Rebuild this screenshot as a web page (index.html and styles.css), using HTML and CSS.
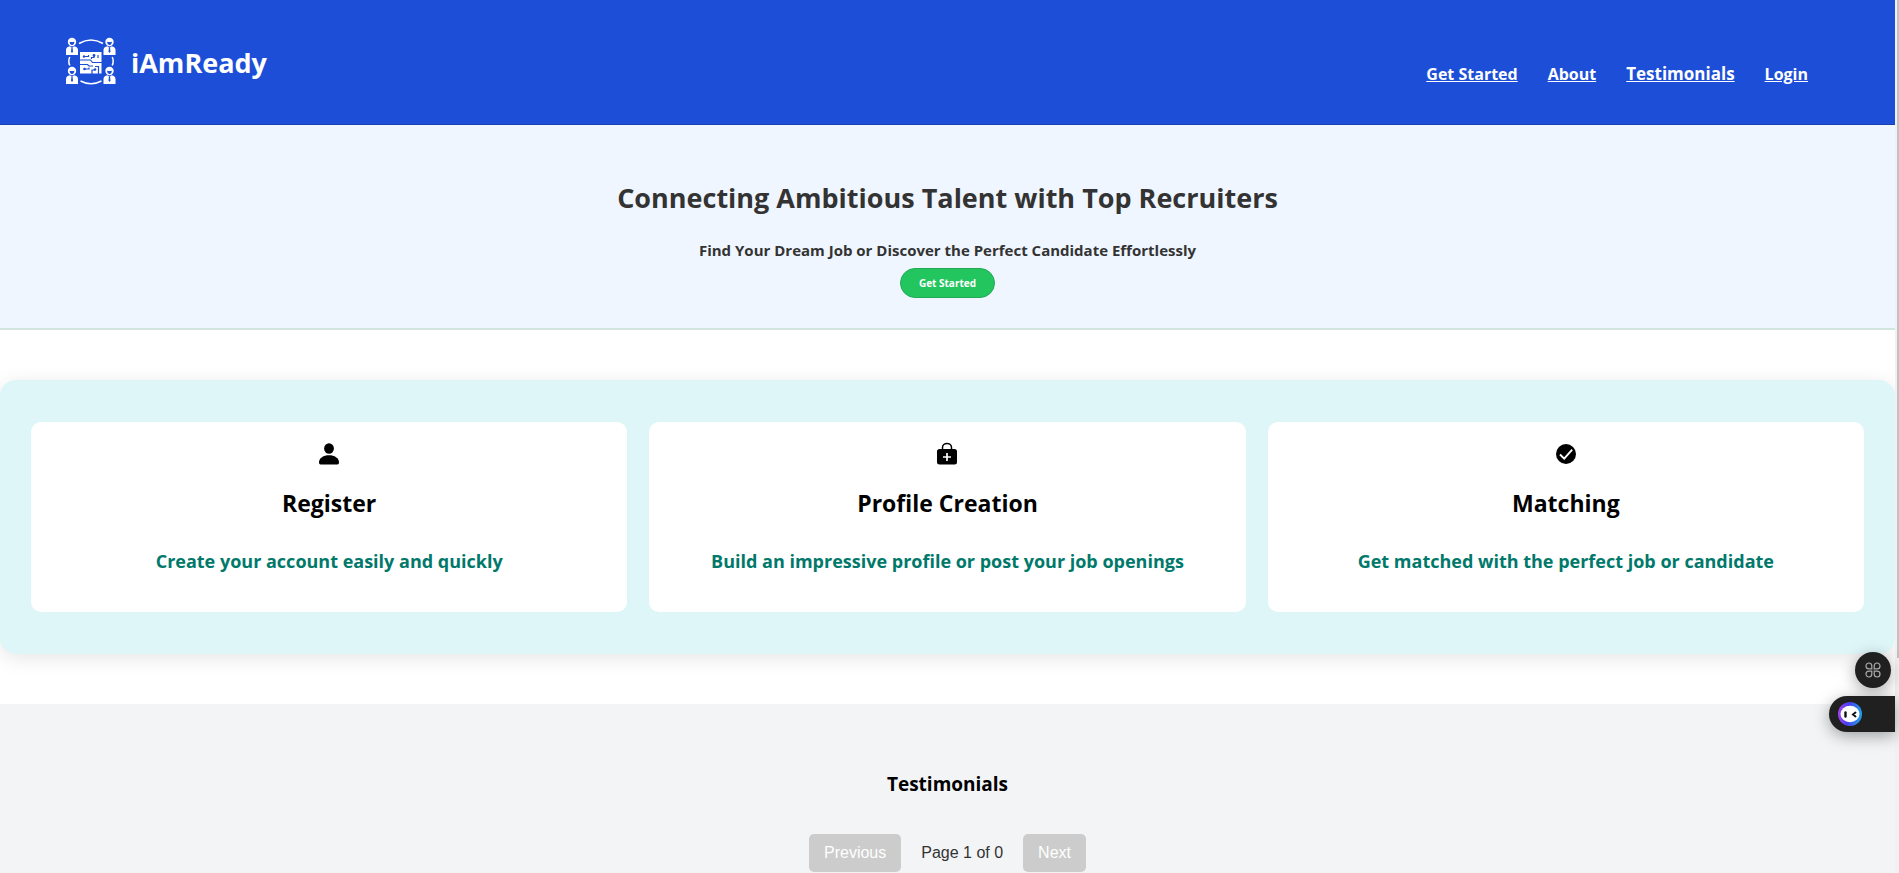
FILE: index.html
```html
<!DOCTYPE html>
<html lang="en">
<head>
<meta charset="utf-8">
<title>iAmReady</title>
<link rel="stylesheet" href="styles.css">
</head>
<body>
<div class="page">
  <header class="header">
    <div class="brand">
      <svg class="brand-logo" viewBox="5 6 52 52" aria-hidden="true">
        <defs>
          <g id="person">
            <circle cx="6" cy="4.5" r="4.2" fill="#fff"/>
            <path d="M3.6 4.2Q6 5 8.4 4.2Q8.3 7.2 6 7.4Q3.7 7.2 3.6 4.2Z" fill="#1d4ed8"/>
            <path d="M0 17.5V12.5Q0 9.6 4 8.8L6 10.4L8 8.8Q12 9.6 12 12.5V17.5Z" fill="#fff"/>
            <path d="M5.4 10.6H6.6L7 14L6 15.4L5 14Z" fill="#1d4ed8"/>
          </g>
        </defs>
        <use href="#person" x="6" y="7.5"/>
        <use href="#person" x="43.5" y="7.5"/>
        <use href="#person" x="6" y="36.5"/>
        <use href="#person" x="43.5" y="36.5"/>
        <g fill="none" stroke="#fff" stroke-width="1.5">
          <path d="M19 13.5Q31 6.5 43 13.5"/>
          <path d="M20.5 51Q31 56.5 41.5 51"/>
          <path d="M9.8 27Q7.8 31 9.8 35.5"/>
          <path d="M52.2 27Q54.2 31 52.2 35.5"/>
        </g>
        <rect x="20" y="22" width="21.5" height="21.5" fill="#fff"/>
        <g fill="none" stroke="#1d4ed8" stroke-width="1.2">
          <path d="M24 26.5H28.500V25M34 25V27.500H31.500V29M20 30H30.500L32.500 32.500H42M38 28V25M20 34.500H27.500L29 36H33M24.500 39H29V37.500M32 44V40H35M38.500 44V36.500H35"/>
        </g>
        <g fill="#1d4ed8"><circle cx="24" cy="26.5" r="1.2"/><circle cx="34" cy="25.5" r="1.4"/><circle cx="24.500" cy="39" r="1.3"/><circle cx="35" cy="39.5" r="1.3"/></g>
      </svg>
      <span class="brand-name">iAmReady</span>
    </div>
    <nav class="nav">
      <a href="#start">Get Started</a>
      <a href="#about">About</a>
      <a class="nav-large" href="#testimonials">Testimonials</a>
      <a href="#login">Login</a>
    </nav>
  </header>

  <main>
    <section class="hero" id="start">
      <h1 class="hero-title">Connecting Ambitious Talent with Top Recruiters</h1>
      <p class="hero-text">Find Your Dream Job or Discover the Perfect Candidate Effortlessly</p>
      <button class="hero-button" type="button">Get Started</button>
    </section>

    <section class="steps" id="about">
      <article class="card">
        <svg class="card-icon" viewBox="0 0 24 24" aria-hidden="true"><ellipse cx="12" cy="6.5" rx="4.9" ry="5.2"/><path d="M2 20.5C2 16 6.500 13.300 12 13.300S22 16 22 20.500Q22 22.500 20.500 22.500H3.500Q2 22.500 2 20.500Z"/></svg>
        <h2 class="card-title">Register</h2>
        <p class="card-text">Create your account easily and quickly</p>
      </article>
      <article class="card">
        <svg class="card-icon" viewBox="0 0 24 24" aria-hidden="true"><rect x="2" y="7" width="20" height="15.5" rx="2.5"/><path d="M7.5 7V5.5a4.5 4 0 0 1 9 0V7" fill="none" stroke="#000" stroke-width="1.5"/><path d="M12 11v8M8 15h8" stroke="#fff" stroke-width="1.7"/></svg>
        <h2 class="card-title">Profile Creation</h2>
        <p class="card-text">Build an impressive profile or post your job openings</p>
      </article>
      <article class="card">
        <svg class="card-icon" viewBox="0 0 24 24" aria-hidden="true"><circle cx="12" cy="12" r="10"/><path d="M6 12.5L10.200 16.700L18.200 7.700" fill="none" stroke="#fff" stroke-width="1.9"/></svg>
        <h2 class="card-title">Matching</h2>
        <p class="card-text">Get matched with the perfect job or candidate</p>
      </article>
    </section>

    <section class="testimonials" id="testimonials">
      <h2 class="testimonials-title">Testimonials</h2>
      <div class="pager">
        <button class="pager-button" type="button" disabled>Previous</button>
        <span class="pager-status">Page 1 of 0</span>
        <button class="pager-button" type="button" disabled>Next</button>
      </div>
    </section>
  </main>
</div>

<div class="scroll-rail" aria-hidden="true"><div class="scroll-thumb"></div></div>

<div class="widgets">
  <button class="widget-apps" type="button" aria-label="Apps">
    <svg viewBox="0 0 16 16" width="16" height="16" fill="none" stroke="#aaa" stroke-width="1.2"><path d="M6.800 6.800H3.900A2.900 2.900 0 1 1 6.800 3.900ZM9.200 6.800V3.900A2.900 2.900 0 1 1 12.100 6.800ZM6.800 9.200V12.100A2.900 2.900 0 1 1 3.900 9.200ZM9.200 9.200H12.100A2.900 2.900 0 1 1 9.200 12.100Z"/></svg>
  </button>
  <button class="widget-chat" type="button" aria-label="Assistant">
    <svg viewBox="0 0 24 24" width="24" height="24">
      <defs><linearGradient id="ring" x1="0" y1=".6" x2="1" y2=".7"><stop offset="0" stop-color="#a142f0"/><stop offset=".4" stop-color="#4a3df0"/><stop offset="1" stop-color="#1fa8e8"/></linearGradient></defs>
      <circle cx="12" cy="12" r="12" fill="url(#ring)"/>
      <ellipse cx="12" cy="12" rx="9.5" ry="8.3" fill="#fff"/>
      <path d="M7.5 10.5V14.5" stroke="#111" stroke-width="2.4" stroke-linecap="round"/>
      <path d="M17.5 10.5L15 12.5L17.5 14.5" fill="none" stroke="#111" stroke-width="2" stroke-linecap="round"/>
    </svg>
  </button>
</div>
</body>
</html>
```
FILE: styles.css
```css
* {
  box-sizing: border-box;
}

body {
  display: flex;
  height: 100vh;
  margin: 0;
  overflow: hidden;
  background: #fff;
  color: #000;
  font-family: "Segoe UI", "Open Sans", "Noto Sans", sans-serif;
}

h1, h2, p {
  margin: 0;
}

button {
  border: 0;
  font: inherit;
}

.page {
  flex: 1;
  min-width: 0;
  overflow: hidden;
}

.header {
  display: flex;
  justify-content: space-between;
  padding: 36px 87px 36px 65px;
  border-bottom: 1px solid #1e40af;
  background: #1d4ed8;
  color: #fff;
}

.brand {
  display: flex;
  align-items: center;
  gap: 14px;
}

.brand-logo {
  width: 52px;
  height: 52px;
}

.brand-name {
  padding-top: 2px;
  font-size: 27px;
  font-weight: 700;
  line-height: 50px;
}

.nav {
  display: flex;
  align-items: baseline;
  gap: 30px;
  padding-top: 26px;
}

.nav a {
  color: #fff;
  font-size: 16px;
  font-weight: 700;
  line-height: 24px;
}

.nav .nav-large {
  font-size: 17px;
}

.hero {
  display: flex;
  flex-direction: column;
  align-items: center;
  padding: 52px 16px 30px;
  border-bottom: 2px solid #d1e7dd;
  background: #eff6ff;
  color: #333;
  text-align: center;
}

.hero-title {
  font-size: 27px;
  font-weight: 700;
  line-height: 42px;
}

.hero-text {
  margin: 19px 0 6px;
  font-size: 15px;
  font-weight: 700;
  line-height: 24px;
}

.hero-button {
  padding: 0 18px;
  border: 1px solid #22a955;
  border-radius: 15px;
  background: #22c55e;
  color: #fff;
  font-size: 10px;
  font-weight: 700;
  line-height: 28px;
}

.steps {
  display: grid;
  grid-template-columns: repeat(3, 1fr);
  gap: 22px;
  margin: 50px 0;
  padding: 42px 31px;
  border-radius: 16px;
  background: #dff6f8;
  box-shadow: 0 4px 20px rgba(0, 0, 0, 0.1);
}

.card {
  display: flex;
  flex-direction: column;
  align-items: center;
  padding: 20px 20px 36px;
  border-radius: 10px;
  background: #fff;
  text-align: center;
}

.card-icon {
  width: 24px;
  height: 24px;
}

.card-title {
  margin: 19px 0 26px;
  font-size: 23px;
  font-weight: 700;
  line-height: 36px;
}

.card-text {
  color: #00796b;
  font-size: 18px;
  font-weight: 700;
  line-height: 29px;
}

.testimonials {
  display: flex;
  flex-direction: column;
  align-items: center;
  gap: 34px;
  padding: 64px 16px;
  background: #f3f4f6;
}

.testimonials-title {
  font-size: 19px;
  font-weight: 700;
  line-height: 32px;
}

.pager {
  display: flex;
  align-items: center;
  gap: 20px;
  color: #333;
  font-family: Arial, "Liberation Sans", sans-serif;
  font-size: 16px;
}

.pager-button {
  padding: 10px 15px;
  border-radius: 5px;
  background: #ccc;
  color: #fff;
  line-height: 18px;
}

.scroll-rail {
  width: 4px;
  padding-left: 2px;
  background: #f1f1f1;
}

.scroll-thumb {
  height: 75.4vh;
  background: #c1c1c1;
}

.widgets {
  position: fixed;
  right: 4px;
  bottom: 141px;
  display: flex;
  flex-direction: column;
  align-items: flex-end;
  gap: 8px;
}

.widget-apps,
.widget-chat {
  display: flex;
  align-items: center;
  height: 36px;
  background: #202020;
  box-shadow: 0 4px 16px rgba(0, 0, 0, 0.35);
}

.widget-apps {
  justify-content: center;
  width: 36px;
  margin-right: 4px;
  padding: 0;
  border-radius: 50%;
}

.widget-chat {
  width: 66px;
  padding: 0 9px;
  border-radius: 18px 0 0 18px;
}
```
